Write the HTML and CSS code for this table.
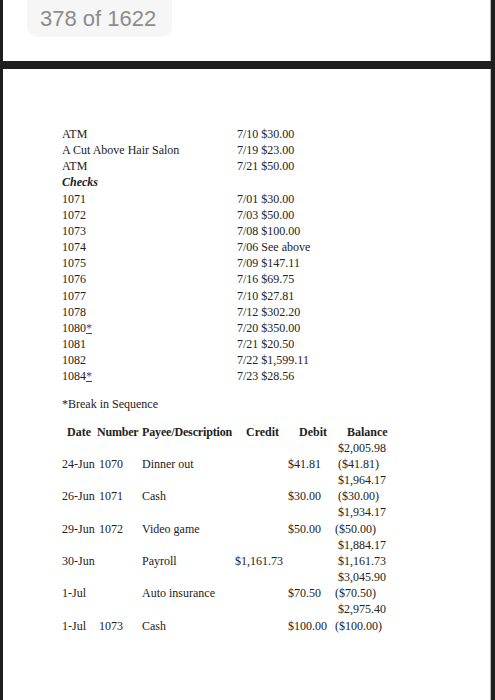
FILE: index.html
```html
<!DOCTYPE html>
<html lang="en">
<head>
<meta charset="utf-8">
<title>Check register</title>
<link rel="stylesheet" href="styles.css">
</head>
<body>
<div class="frame">
  <header class="topbar">
    <div class="pill">378 of 1622</div>
  </header>
  <main class="page">
    <div class="list">
      <span>ATM</span><span>7/10 $30.00</span>
      <span>A Cut Above Hair Salon</span><span>7/19 $23.00</span>
      <span>ATM</span><span>7/21 $50.00</span>
      <span class="heading">Checks</span><span></span>
      <span>1071</span><span>7/01 $30.00</span>
      <span>1072</span><span>7/03 $50.00</span>
      <span>1073</span><span>7/08 $100.00</span>
      <span>1074</span><span>7/06 See above</span>
      <span>1075</span><span>7/09 $147.11</span>
      <span>1076</span><span>7/16 $69.75</span>
      <span>1077</span><span>7/10 $27.81</span>
      <span>1078</span><span>7/12 $302.20</span>
      <span>1080<a class="mark" href="#">*</a></span><span>7/20 $350.00</span>
      <span>1081</span><span>7/21 $20.50</span>
      <span>1082</span><span>7/22 $1,599.11</span>
      <span>1084<a class="mark" href="#">*</a></span><span>7/23 $28.56</span>
    </div>
    <p class="note">*Break in Sequence</p>
    <div class="ledger">
      <span class="th th-date">Date</span><span class="th th-no">Number</span><span class="th th-payee">Payee/Description</span><span class="th th-num">Credit</span><span class="th th-num">Debit</span><span class="th th-bal">Balance</span>

      <span></span><span></span><span></span><span></span><span></span><span class="bal">$2,005.98</span>

      <span>24-Jun</span><span class="no">1070</span><span class="payee">Dinner out</span><span></span><span>$41.81</span><span class="bal">($41.81)</span>
      <span></span><span></span><span></span><span></span><span></span><span class="bal">$1,964.17</span>

      <span>26-Jun</span><span class="no">1071</span><span class="payee">Cash</span><span></span><span>$30.00</span><span class="bal">($30.00)</span>
      <span></span><span></span><span></span><span></span><span></span><span class="bal">$1,934.17</span>

      <span>29-Jun</span><span class="no">1072</span><span class="payee">Video game</span><span></span><span>$50.00</span><span class="bal bal-l">($50.00)</span>
      <span></span><span></span><span></span><span></span><span></span><span class="bal">$1,884.17</span>

      <span>30-Jun</span><span class="no"></span><span class="payee">Payroll</span><span>$1,161.73</span><span></span><span class="bal">$1,161.73</span>
      <span></span><span></span><span></span><span></span><span></span><span class="bal">$3,045.90</span>

      <span>1-Jul</span><span class="no"></span><span class="payee">Auto insurance</span><span></span><span>$70.50</span><span class="bal bal-l">($70.50)</span>
      <span></span><span></span><span></span><span></span><span></span><span class="bal">$2,975.40</span>

      <span>1-Jul</span><span class="no">1073</span><span class="payee">Cash</span><span></span><span>$100.00</span><span class="bal bal-l">($100.00)</span>
    </div>
  </main>
</div>
</body>
</html>
```

FILE: styles.css
```css
html, body {
  margin: 0;
  padding: 0;
}

body {
  background: #1e1e20;
  height: 700px;
  overflow: hidden;
}

.frame {
  display: flex;
  flex-direction: column;
  gap: 8px;
  height: 700px;
  padding: 0 5px 0 3px;
  box-sizing: border-box;
}

.topbar {
  background: #ffffff;
  height: 61px;
  flex: none;
  padding-left: 24px;
  box-shadow: 1px 0 0 #b9b9b9;
  overflow: hidden;
}

.pill {
  width: 132px;
  height: 37px;
  margin-top: -10px;
  padding: 10px 0 0 13px;
  background: #f6f6f7;
  border-radius: 10px;
  font-family: "Liberation Sans", Arial, sans-serif;
  font-size: 22px;
  line-height: 37px;
  color: #8c8c8e;
}

.page {
  flex: 1;
  background: #ffffff;
  box-shadow: 1px 0 0 #b9b9b9;
  padding: 57px 0 0 59px;
  font-family: "Liberation Serif", "Times New Roman", serif;
  font-size: 12px;
  line-height: 16.15px;
  color: #222222;
}

.list {
  display: grid;
  grid-template-columns: 175px auto;
}

.heading {
  font-weight: bold;
  font-style: italic;
}

.mark {
  color: #3b3bb5;
  text-decoration: underline;
}

.note {
  margin: 11px 0 0 0;
}

.ledger {
  margin-top: 12px;
  display: grid;
  grid-template-columns: 36px 43px 94px 53px 47px 60px;
  white-space: nowrap;
}

.th {
  font-weight: bold;
}

.th-date {
  padding-left: 5px;
}

.th-no {
  margin-left: -1px;
  letter-spacing: -0.2px;
}

.th-payee {
  padding-left: 1px;
  letter-spacing: -0.15px;
}

.th-num {
  padding-left: 11px;
}

.th-bal {
  padding-left: 12px;
}

.no {
  padding-left: 1px;
}

.payee {
  padding-left: 1px;
}

.bal {
  padding-left: 3px;
}

.bal-l {
  padding-left: 0;
}
```
